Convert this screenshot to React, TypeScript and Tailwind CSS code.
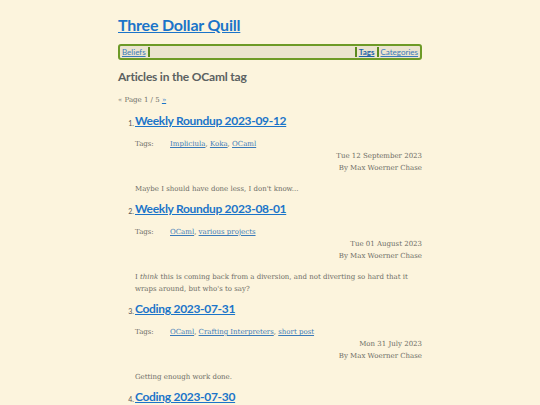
const posts = [
  {
    title: "Weekly Roundup 2023-09-12",
    tags: ["Impliciula", "Koka", "OCaml"],
    date: "Tue 12 September 2023",
    summary: <>Maybe I should have done less, I don't know...</>,
  },
  {
    title: "Weekly Roundup 2023-08-01",
    tags: ["OCaml", "various projects"],
    date: "Tue 01 August 2023",
    summary: (
      <>
        I <em>think</em> this is coming back from a diversion, and not diverting so hard that it wraps around, but who's to say?
      </>
    ),
  },
  {
    title: "Coding 2023-07-31",
    tags: ["OCaml", "Crafting Interpreters", "short post"],
    date: "Mon 31 July 2023",
    summary: <>Getting enough work done.</>,
  },
  {
    title: "Coding 2023-07-30",
    tags: ["OCaml"],
    date: "Sun 30 July 2023",
    summary: <>More work.</>,
  },
];

const heading = "font-['Lato','Open_Sans',sans-serif]";
const body = "font-['DejaVu_Serif','Liberation_Serif',serif]";

export default function App() {
  return (
    <div className={`min-h-[405px] h-[405px] overflow-hidden bg-[#fcf4dd] ${body}`}>
      <div className="w-[304px] mx-auto pt-[14px]">
        <a href="#" className={`${heading} block text-[16px] leading-[22px] font-bold tracking-[-0.2px] text-[#1b74c9] underline`}>
          Three Dollar Quill
        </a>

        {/* nav bar */}
        <div className={`${heading} mt-[8px] flex items-center h-[16px] border-2 border-[#6d9a27] rounded-[3px] bg-[#ebe4cf] px-[1px] text-[8px] leading-[10px]`}>
          <a href="#" className="text-[#3a7ab8] underline px-[1px]">Beliefs</a>
          <span className="w-[2px] h-[10px] bg-[#5b8a1e] ml-[1px]" />
          <div className="flex-1" />
          <span className="w-[2px] h-[10px] bg-[#5b8a1e] mr-[1px]" />
          <a href="#" className="text-[#1d62a8] font-bold underline px-[1px]">Tags</a>
          <span className="w-[2px] h-[10px] bg-[#5b8a1e] mx-[1px]" />
          <a href="#" className="text-[#3a7ab8] underline px-[1px]">Categories</a>
        </div>

        <h1 className={`${heading} mt-[8px] text-[12px] leading-[18px] font-bold tracking-[-0.2px] text-[#5b6161]`}>Articles in the OCaml tag</h1>

        <div className="mt-[9px] text-[7px] leading-[10px] text-[#6d6d66]">
          « Page 1 / 5 <a href="#" className="text-[#1b74c9] underline">»</a>
        </div>

        <ol className="mt-[5px]">
          {posts.map((p, i) => (
            <li key={p.title} className="flex">
              <span className={`${heading} w-[17px] shrink-0 text-right pr-[1px] text-[7px] leading-[22px] pt-[2px] text-[#555]`}>{i + 1}.</span>
              <div className="flex-1">
                <a href="#" className={`${heading} block text-[12px] leading-[22px] font-bold tracking-[-0.3px] text-[#1b74c9] underline`}>
                  {p.title}
                </a>
                <div className="mt-[6px] flex text-[7px] leading-[12px] text-[#6d6d66]">
                  <span className="w-[35px]">Tags:</span>
                  <span>
                    {p.tags.map((t, j) => (
                      <span key={t}>
                        <a href="#" className="text-[#3a7ab8] underline">{t}</a>
                        {j < p.tags.length - 1 ? ", " : ""}
                      </span>
                    ))}
                  </span>
                </div>
                <div className="text-right text-[7px] leading-[12px] text-[#6d6d66]">
                  <div>{p.date}</div>
                  <div>By Max Woerner Chase</div>
                </div>
                <p className="mt-[9px] mb-[3px] text-[7px] leading-[12px] text-[#6d6d66]">{p.summary}</p>
              </div>
            </li>
          ))}
        </ol>
      </div>
    </div>
  );
}
